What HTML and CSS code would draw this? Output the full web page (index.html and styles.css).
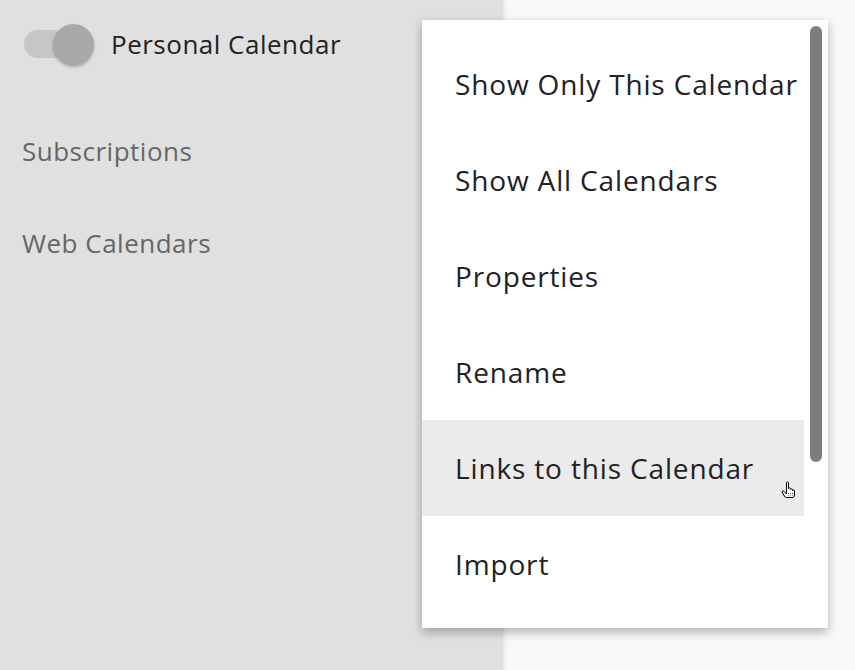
FILE: index.html
```html
<!DOCTYPE html>
<html>
<head>
<meta charset="utf-8">
<link rel="stylesheet" href="styles.css">
</head>
<body>
<div class="page">
  <aside class="sidebar">
    <div class="cal-row">
      <span class="toggle"><span class="track"></span><span class="knob"></span></span>
      <span class="cal-name">Personal Calendar</span>
    </div>
    <div class="section">Subscriptions</div>
    <div class="section">Web Calendars</div>
  </aside>
  <main class="main"></main>
</div>
<div class="menu">
  <ul class="items">
    <li class="item">Show Only This Calendar</li>
    <li class="item">Show All Calendars</li>
    <li class="item">Properties</li>
    <li class="item">Rename</li>
    <li class="item hover">Links to this Calendar
      <svg class="cursor" width="16" height="18" viewBox="0 0 16 18">
        <path d="M5.5 1.5 C5.5 0.8 7.5 0.8 7.5 1.5 V7.5 C7.5 6.8 9.5 6.8 9.5 7.5 V8.5 C9.5 7.8 11.5 7.8 11.5 8.5 V9.5 C11.5 8.8 13.5 8.8 13.5 9.5 V14 C13.5 15.5 12.5 16.5 11 16.5 H5.5 C4.5 16.5 3.8 15.8 3.3 15 L1.2 11 C0.8 10.2 2 9.3 2.8 10.2 L5.5 13 Z" fill="#fff" stroke="#000" stroke-width="1" stroke-linejoin="round"/>
        <path d="M7.5 12 V14.5 M9.5 12 V14.5 M11.5 12 V14.5" stroke="#000" stroke-width="0.8" stroke-dasharray="1 1"/>
      </svg>
    </li>
    <li class="item">Import</li>
  </ul>
  <div class="scrollbar"><div class="thumb"></div></div>
</div>
</body>
</html>
```
FILE: styles.css
```css
html, body {
  margin: 0;
  padding: 0;
}
body {
  width: 855px;
  height: 670px;
  overflow: hidden;
  font-family: "Open Sans", "Noto Sans", sans-serif;
  background: #f9f9f9;
  position: relative;
}
.page {
  display: flex;
  height: 670px;
}
.sidebar {
  width: 503px;
  flex: none;
  background: #e0e0e0;
  box-shadow: 2px 0 4px rgba(0,0,0,0.08);
  position: relative;
  z-index: 1;
}
.main {
  flex: 1;
  background: #f9f9f9;
}
.cal-row {
  display: flex;
  align-items: center;
  height: 48px;
  margin-top: 20px;
  padding-left: 24px;
}
.toggle {
  position: relative;
  width: 70px;
  height: 42px;
  flex: none;
}
.track {
  position: absolute;
  left: 0;
  top: 7px;
  width: 56px;
  height: 28px;
  border-radius: 14px;
  background: #c6c6c6;
}
.knob {
  position: absolute;
  left: 29px;
  top: 1px;
  width: 41px;
  height: 41px;
  border-radius: 50%;
  background: #a9a9a9;
  box-shadow: 0 2px 3px rgba(0,0,0,0.25);
}
.cal-name {
  margin-left: 17px;
  font-size: 26px;
  color: #222;
  letter-spacing: 0.5px;
}
.section {
  margin-left: 22px;
  font-size: 26px;
  color: #666;
  letter-spacing: 0.5px;
}
.cal-row + .section {
  margin-top: 65px;
}
.section + .section {
  margin-top: 56px;
}
.menu {
  position: absolute;
  left: 422px;
  top: 20px;
  width: 406px;
  height: 608px;
  background: #fff;
  box-shadow: 0 4px 10px rgba(0,0,0,0.3);
  z-index: 5;
  display: flex;
}
.items {
  list-style: none;
  margin: 0;
  padding: 16px 0;
  width: 382px;
}
.item {
  position: relative;
  height: 96px;
  display: flex;
  align-items: center;
  padding-left: 33px;
  font-size: 28px;
  color: #222;
  letter-spacing: 0.85px;
}
.item.hover {
  background: #ebebeb;
}
.cursor {
  position: absolute;
  left: 359px;
  top: 61px;
}
.scrollbar {
  flex: 1;
  position: relative;
}
.thumb {
  position: absolute;
  left: 6px;
  top: 6px;
  width: 12px;
  height: 436px;
  border-radius: 6px;
  background: #7b7e7e;
}
```
